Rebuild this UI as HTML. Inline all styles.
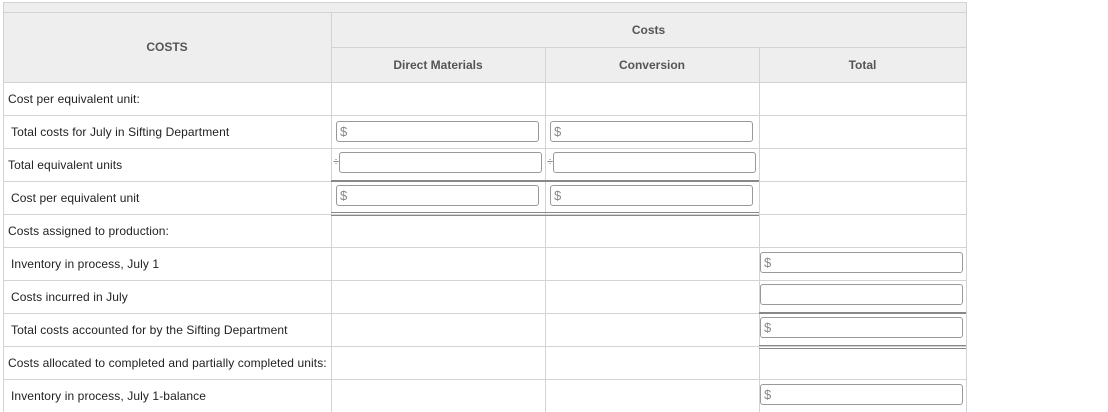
<!DOCTYPE html><html><head><style>
body{margin:0;width:1108px;height:412px;background:#fff;font-family:"Liberation Sans",sans-serif;position:relative;overflow:hidden}
div{position:absolute;box-sizing:border-box}
.h{background:#eee}
.vl{width:1px;background:#d0d4d6}
.hl{height:1px;background:#d0d4d6}
.t{font-size:12px;color:#222;line-height:14px;letter-spacing:0.1px}
.th{font-size:12px;font-weight:bold;color:#555;text-align:center}
.in{border:1px solid #999;border-radius:3px;background:#fff;height:21px;font-size:13px;color:#888;padding:2px 0 0 3px;line-height:15px}
.thick{height:2px;background:#888}
.dbl{height:4px;border-top:1px solid #888;border-bottom:1px solid #888}
.dv{font-size:11px;color:#666}
</style></head><body>
<div class="h" style="left:3px;top:2px;width:963px;height:80px"></div>
<div class="hl" style="left:3px;top:2px;width:963px"></div>
<div class="hl" style="left:3px;top:12px;width:963px"></div>
<div class="hl" style="left:331px;top:47px;width:635px"></div>
<div class="th" style="left:3px;top:40px;width:328px">COSTS</div>
<div class="th" style="left:331px;top:23px;width:635px">Costs</div>
<div class="th" style="left:331px;top:58px;width:214px">Direct Materials</div>
<div class="th" style="left:545px;top:58px;width:214px">Conversion</div>
<div class="th" style="left:759px;top:58px;width:207px">Total</div>
<div class="hl" style="left:3px;top:82px;width:963px"></div>
<div class="hl" style="left:3px;top:115px;width:963px"></div>
<div class="hl" style="left:3px;top:148px;width:963px"></div>
<div class="hl" style="left:3px;top:181px;width:963px"></div>
<div class="hl" style="left:3px;top:214px;width:963px"></div>
<div class="hl" style="left:3px;top:247px;width:963px"></div>
<div class="hl" style="left:3px;top:280px;width:963px"></div>
<div class="hl" style="left:3px;top:313px;width:963px"></div>
<div class="hl" style="left:3px;top:346px;width:963px"></div>
<div class="hl" style="left:3px;top:379px;width:963px"></div>
<div class="vl" style="left:3px;top:2px;height:410px"></div>
<div class="vl" style="left:331px;top:12px;height:400px"></div>
<div class="vl" style="left:545px;top:47px;height:365px"></div>
<div class="vl" style="left:759px;top:47px;height:365px"></div>
<div class="vl" style="left:966px;top:2px;height:410px"></div>
<div class="t" style="left:8px;top:92px">Cost per equivalent unit:</div>
<div class="t" style="left:11px;top:125px">Total costs for July in Sifting Department</div>
<div class="t" style="left:8px;top:158px">Total equivalent units</div>
<div class="t" style="left:11px;top:191px">Cost per equivalent unit</div>
<div class="t" style="left:8px;top:224px">Costs assigned to production:</div>
<div class="t" style="left:11px;top:257px">Inventory in process, July 1</div>
<div class="t" style="left:11px;top:290px">Costs incurred in July</div>
<div class="t" style="left:11px;top:323px">Total costs accounted for by the Sifting Department</div>
<div class="t" style="left:8px;top:356px">Costs allocated to completed and partially completed units:</div>
<div class="t" style="left:11px;top:389px">Inventory in process, July 1-balance</div>
<div class="in" style="left:336px;top:121px;width:203px">$</div>
<div class="in" style="left:550px;top:121px;width:203px">$</div>
<div class="dv" style="left:333px;top:156px">÷</div>
<div class="in" style="left:339px;top:152px;width:203px"></div>
<div class="dv" style="left:547px;top:156px">÷</div>
<div class="in" style="left:553px;top:152px;width:203px"></div>
<div class="thick" style="left:331px;top:180px;width:428px"></div>
<div class="in" style="left:336px;top:185px;width:203px">$</div>
<div class="in" style="left:550px;top:185px;width:203px">$</div>
<div class="dbl" style="left:331px;top:212px;width:428px"></div>
<div class="in" style="left:760px;top:252px;width:203px">$</div>
<div class="in" style="left:760px;top:284px;width:203px"></div>
<div class="thick" style="left:759px;top:312px;width:207px"></div>
<div class="in" style="left:760px;top:317px;width:203px">$</div>
<div class="dbl" style="left:759px;top:345px;width:207px"></div>
<div class="in" style="left:760px;top:384px;width:203px">$</div>
</body></html>
